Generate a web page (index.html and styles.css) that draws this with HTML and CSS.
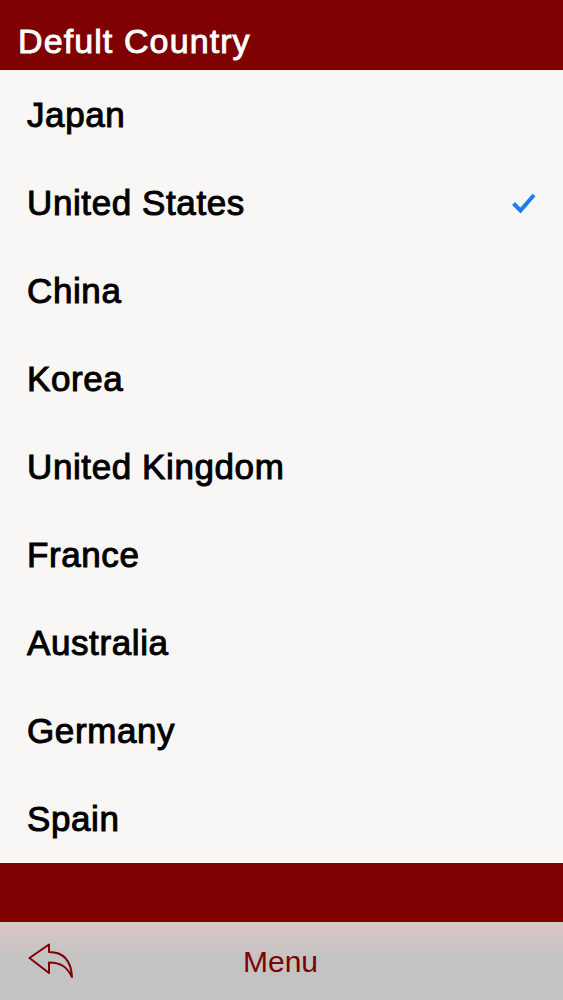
FILE: index.html
```html
<!DOCTYPE html>
<html lang="en">
<head>
  <meta charset="UTF-8" />
  <meta name="viewport" content="width=device-width, initial-scale=1.0"/>
  <title>Defult Country</title>
  <link rel="stylesheet" href="styles.css">
</head>
<body>
  <div class="title-bar">Defult Country</div>
  <div class="country-list">
    <div class="country">Japan</div>
    <div class="country">
      United States
      <svg class="check" width="26" height="22" viewBox="0 0 26 22">
        <path d="M2.500 11.500 L9.500 18.500 L23 3" fill="none" stroke="#1c7cf0" stroke-width="4"/>
      </svg>
    </div>
    <div class="country">China</div>
    <div class="country">Korea</div>
    <div class="country">United Kingdom</div>
    <div class="country">France</div>
    <div class="country">Australia</div>
    <div class="country">Germany</div>
    <div class="country">Spain</div>
  </div>
  <div class="red-band"></div>
  <div class="toolbar">
    <svg class="back" width="46" height="36" viewBox="0 0 46 36">
      <path d="M1.500 16 L21 2.500 L21 10 C34 10 43 17 44 35 C39 25 33 20.500 21 20.500 L21 31 Z" fill="none" stroke="#7f0000" stroke-width="2" stroke-linejoin="round"/>
    </svg>
    <span class="menu-label">Menu</span>
  </div>
</body>
</html>
```

FILE: styles.css
```css
* {
  box-sizing: border-box;
}
body {
  margin: 0;
  height: 1000px;
  display: flex;
  flex-direction: column;
  overflow: hidden;
  font-family: "Liberation Sans", Arial, sans-serif;
  background: #f9f7f6;
}
.title-bar {
  height: 70px;
  flex: none;
  padding: 12px 0 0 18px;
  display: flex;
  align-items: center;
  background: #7f0000;
  color: #fff;
  font-size: 34px;
  letter-spacing: 1.1px;
  -webkit-text-stroke: 0.9px #fff;
}
.country-list {
  flex: none;
  height: 793px;
  padding-top: 1px;
}
.country {
  height: 88px;
  padding: 0 26px 0 27px;
  display: flex;
  align-items: center;
  justify-content: space-between;
  color: #000;
  font-size: 35px;
  letter-spacing: 0.6px;
  -webkit-text-stroke: 1px #000;
}
.red-band {
  height: 59px;
  flex: none;
  background: #7f0000;
}
.toolbar {
  flex: 1;
  position: relative;
  display: flex;
  align-items: center;
  justify-content: center;
  background: linear-gradient(#dcc6c6, #c4c3c3 45%, #c3c3c3);
}
.back {
  position: absolute;
  left: 28px;
  top: 20px;
}
.menu-label {
  color: #7f0000;
  font-size: 30px;
  padding: 2px 2px 0 0;
}
```
